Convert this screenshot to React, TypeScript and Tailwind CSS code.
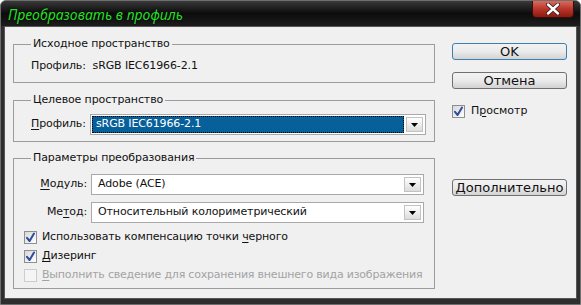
import React from "react";

function Check({ checked, disabled }: { checked?: boolean; disabled?: boolean }) {
  return (
    <span
      className={
        disabled
          ? "w-[13px] h-[13px] border border-[#cdcdcd] bg-[#f5f5f5] shrink-0"
          : "w-[13px] h-[13px] border border-[#8e8f8f] bg-gradient-to-br from-[#d8d8d8] to-white shrink-0 flex items-center justify-center"
      }
    >
      {checked && (
        <svg width="11" height="11" viewBox="0 0 11 11">
          <path d="M2 5.8 L4.6 9 L9 1.5" stroke="#2d4c9c" strokeWidth="2" fill="none" strokeLinecap="round" strokeLinejoin="round" />
        </svg>
      )}
    </span>
  );
}

function Arrow() {
  return (
    <div className="w-[17px] h-[15px] border border-[#c2c2c2] bg-gradient-to-b from-white to-[#dcdcdc] flex items-center justify-center shrink-0">
      <svg width="7" height="4" viewBox="0 0 7 4">
        <path d="M0 0h7L3.5 4z" fill="#000" />
      </svg>
    </div>
  );
}

function Select({ text, focused, wide }: { text: string; focused?: boolean; wide?: boolean }) {
  return (
    <div
      className={
        (wide ? "w-[336px] " : "w-[333px] ") +
        "h-[21px] border border-[#a9a9a9] bg-white flex items-center p-[1px] pr-[1px]"
      }
    >
      {focused ? (
        <div className="flex-1 h-full bg-[#07609a] text-white border border-dotted border-black flex items-center pl-[3px]">
          {text}
        </div>
      ) : (
        <div className="flex-1 h-full flex items-center pl-[5px]">{text}</div>
      )}
      <div className="ml-[2px] mr-[1px]">
        <Arrow />
      </div>
    </div>
  );
}

function Btn({ children, def }: { children: React.ReactNode; def?: boolean }) {
  return (
    <div
      className={
        (def ? "border-[#3c7fb1] " : "border-[#707070] ") +
        "w-[115px] h-[17px] border rounded-[3px] bg-gradient-to-b from-[#f2f2f2] via-[#ebebeb] to-[#d2d2d2] flex items-center justify-center text-[13px] leading-none"
      }
    >
      {children}
    </div>
  );
}

export default function App() {
  return (
    <div className="w-[581px] h-[305px] bg-[#2e2e2e] flex flex-col font-['DejaVu_Sans',sans-serif] text-[11px] tracking-[-0.12px] text-[#111] rounded-t-[6px] overflow-hidden border border-[#6e6e6e] whitespace-nowrap">
      <div className="h-[25px] shrink-0 flex items-start justify-between bg-gradient-to-b from-[#3a3a3a] via-[#0c0c0c] to-[#1d1d1d]">
        <div className="pl-[7px] pt-[6px] text-[14px] leading-[16px] italic tracking-normal text-[#25df25] font-['Noto_Sans',sans-serif] [text-shadow:0_0_3px_#000]">
          Преобразовать в профиль
        </div>
        <div className="mr-[6px] -mt-[1px] w-[42px] h-[18px] rounded-b-[4px] border border-[#3a0e0a] bg-gradient-to-b from-[#d86a5e] via-[#b8352a] to-[#8e1a10] flex items-center justify-center">
          <svg width="14" height="12" viewBox="0 0 14 12">
            <path d="M2 1.5 L12 10.5 M12 1.5 L2 10.5" stroke="#3a1a16" strokeWidth="4" strokeLinecap="round" />
            <path d="M2 1.5 L12 10.5 M12 1.5 L2 10.5" stroke="#fff" strokeWidth="2.4" strokeLinecap="round" />
          </svg>
        </div>
      </div>
      <div className="flex-1 mx-[3px] mb-[5px] bg-[#f0f0f0] border border-[#565656] flex">
        <div className="pl-[8px] pt-[10px] w-[430px] flex flex-col">
          <fieldset className="w-[422px] border border-[#9c9c9c] pl-[17px] pt-[8px] pb-[9px]">
            <legend className="px-[2px] leading-[14px]">Исходное пространство</legend>
            <div className="leading-[14px]">
              Профиль:&nbsp;&nbsp;sRGB IEC61966-2.1
            </div>
          </fieldset>
          <fieldset className="mt-[10px] w-[422px] border border-[#9c9c9c] pl-[17px] pt-[7px] pb-[6px]">
            <legend className="px-[2px] leading-[14px]">Целевое пространство</legend>
            <div className="flex items-center">
              <span className="w-[59px]">
                <u className="underline-offset-2">П</u>рофиль:
              </span>
              <Select text="sRGB IEC61966-2.1" focused wide />
            </div>
          </fieldset>
          <fieldset className="mt-[9px] w-[422px] border border-[#9c9c9c] pl-[10px] pt-[9px] pb-[3px]">
            <legend className="ml-[7px] px-[2px] leading-[14px]">Параметры преобразования</legend>
            <div className="flex items-center">
              <span className="w-[67px] text-right pr-[4px]">
                <u className="underline-offset-2">М</u>одуль:
              </span>
              <Select text="Adobe (ACE)" />
            </div>
            <div className="flex items-center mt-[7px]">
              <span className="w-[67px] text-right pr-[4px]">
                Ме<u className="underline-offset-2">т</u>од:
              </span>
              <Select text="Относительный колориметрический" />
            </div>
            <div className="mt-[5px] h-[19px] flex items-center gap-[5px]">
              <Check checked />
              <span>
                Использовать компенсацию точки <u className="underline-offset-2">ч</u>ерного
              </span>
            </div>
            <div className="h-[19px] flex items-center gap-[5px]">
              <Check checked />
              <span>
                <u className="underline-offset-2">Д</u>изеринг
              </span>
            </div>
            <div className="h-[19px] flex items-center gap-[5px] text-[#a3a3a3]">
              <Check disabled />
              <span className="tracking-[-0.2px]">
                <u className="underline-offset-2">В</u>ыполнить сведение для сохранения внешнего вида изображения
              </span>
            </div>
          </fieldset>
        </div>
        <div className="ml-[17px] pt-[16px] flex flex-col tracking-normal">
          <Btn def>OK</Btn>
          <div className="mt-[12px]">
            <Btn>Отмена</Btn>
          </div>
          <div className="mt-[15px] h-[14px] flex items-center gap-[6px] text-[11px]">
            <Check checked />
            <span>
              П<u className="underline-offset-2">р</u>осмотр
            </span>
          </div>
          <div className="mt-[61px]">
            <Btn>Дополнительно</Btn>
          </div>
        </div>
      </div>
    </div>
  );
}
